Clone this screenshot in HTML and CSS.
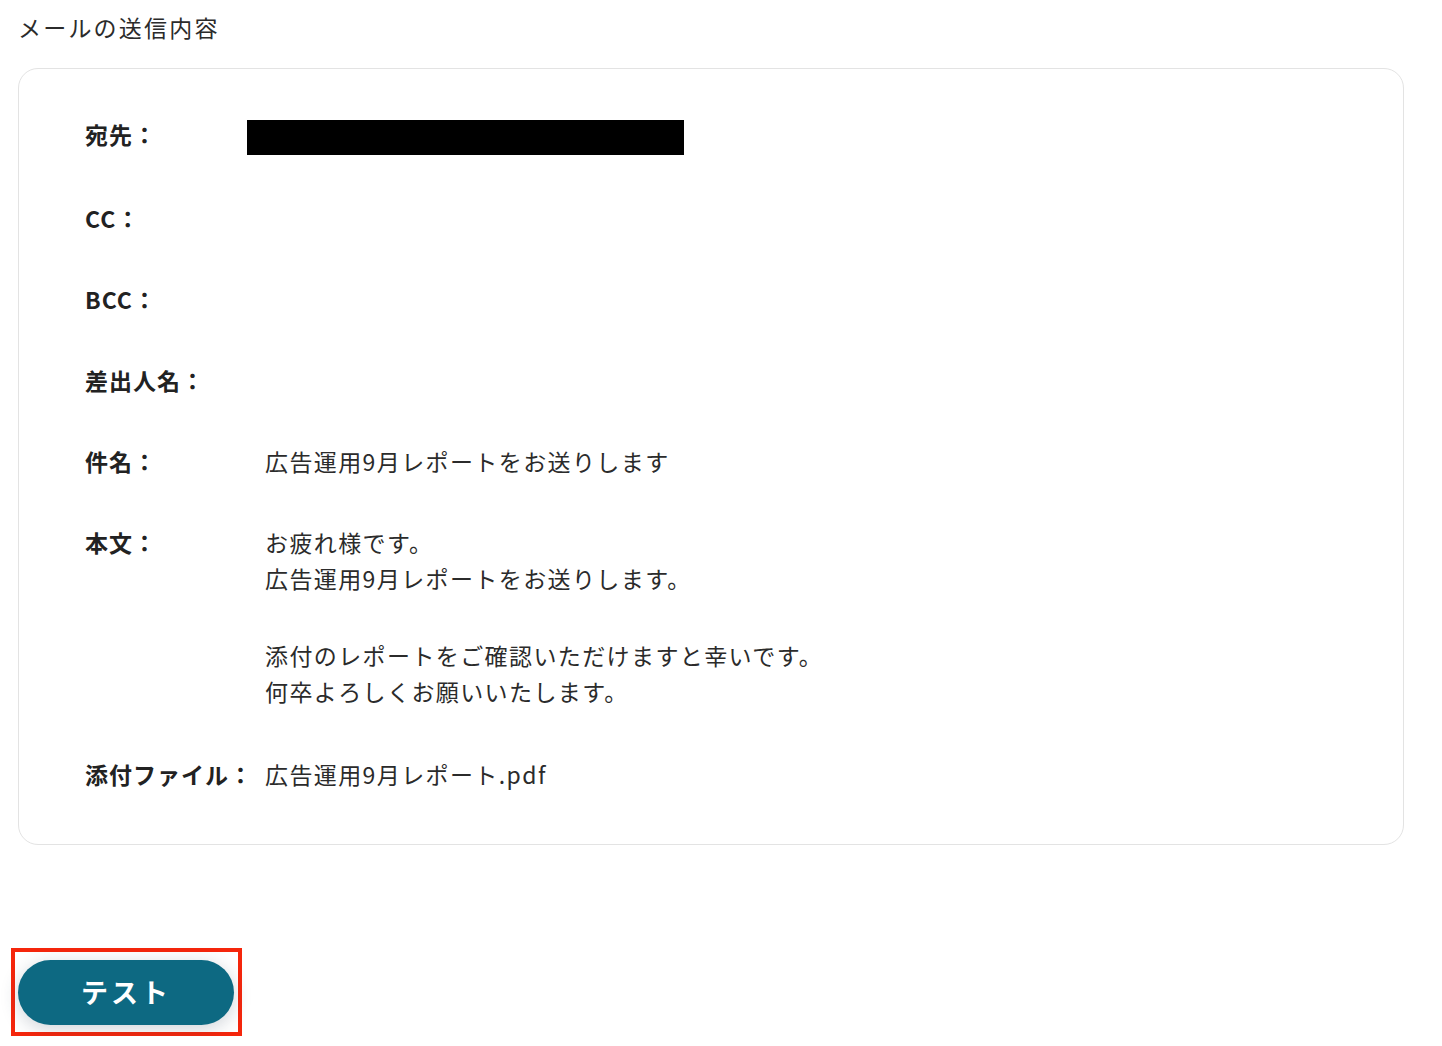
FILE: index.html
```html
<!DOCTYPE html>
<html lang="ja">
<head>
<meta charset="utf-8">
<title>メールの送信内容</title>
<link rel="stylesheet" href="styles.css">
</head>
<body>
<div class="page">
  <h2 class="title">メールの送信内容</h2>
  <div class="card">
    <div class="grid">
      <div class="label">宛先：</div>
      <div class="value"><span class="redact"></span></div>

      <div class="label">CC：</div>
      <div class="value"></div>

      <div class="label">BCC：</div>
      <div class="value"></div>

      <div class="label">差出人名：</div>
      <div class="value"></div>

      <div class="label">件名：</div>
      <div class="value">広告運用9月レポートをお送りします</div>

      <div class="label">本文：</div>
      <div class="value body-text">
        <p class="para">お疲れ様です。<br>広告運用9月レポートをお送りします。</p>
        <p class="para">添付のレポートをご確認いただけますと幸いです。<br>何卒よろしくお願いいたします。</p>
      </div>

      <div class="label">添付ファイル：</div>
      <div class="value">広告運用9月レポート.pdf</div>
    </div>
  </div>
  <div class="actions">
    <div class="highlight">
      <button class="btn" type="button">テスト</button>
    </div>
  </div>
</div>
</body>
</html>
```

FILE: styles.css
```css
* { box-sizing: border-box; }
html, body {
  margin: 0;
  padding: 0;
  background: #ffffff;
}
body {
  font-family: "Noto Sans CJK JP", "Noto Sans", sans-serif;
  color: #2b2b2b;
}
.page {
  padding: 10px 38px 0 18px;
}
.title {
  margin: 0;
  font-size: 23px;
  font-weight: 400;
  line-height: 34px;
  letter-spacing: 2.2px;
  color: #2b2b2b;
}
.card {
  margin-top: 24px;
  border: 1px solid #e3e3e3;
  border-radius: 20px;
  padding: 47px 20px 52px 66px;
}
.grid {
  display: grid;
  grid-template-columns: 180px 1fr;
  row-gap: 45px;
  font-size: 23px;
  line-height: 36px;
}
.label {
  font-weight: 700;
  color: #222222;
  letter-spacing: 1px;
  min-height: 36px;
}
.value {
  color: #2b2b2b;
  letter-spacing: 1.4px;
  min-height: 36px;
}
.body-text { margin-bottom: 2px; }
.para { margin: 0; }
.para + .para { margin-top: 41px; }
.redact {
  display: block;
  width: 437px;
  height: 35px;
  margin-left: -18px;
  margin-top: 4px;
  background: #000000;
}
.actions {
  padding-top: 103px;
}
.highlight {
  display: inline-block;
  margin-left: -7px;
  border: 4px solid #f5260c;
  padding: 8px 4px 7px 3px;
}
.btn {
  display: block;
  width: 216px;
  height: 65px;
  border: none;
  border-radius: 33px;
  background: #0d6982;
  color: #ffffff;
  font-family: "Noto Sans CJK JP", "Noto Sans", sans-serif;
  font-size: 27px;
  font-weight: 700;
  letter-spacing: 3px;
  padding: 0 0 3px 0;
  box-shadow: 0 4px 18px rgba(40, 60, 80, 0.22);
}
```
